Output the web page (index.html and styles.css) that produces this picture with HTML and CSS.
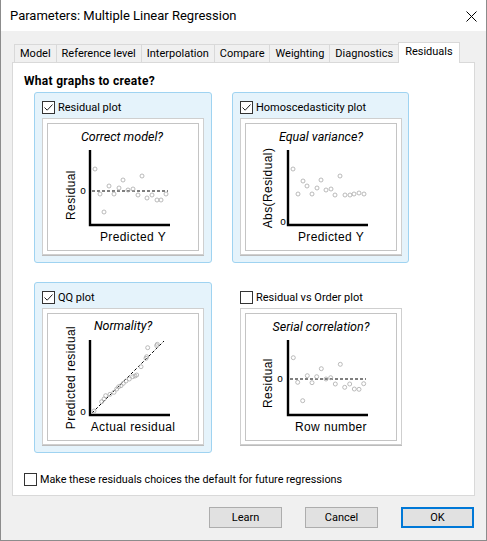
FILE: index.html
```html
<!DOCTYPE html>
<html>
<head>
<meta charset="utf-8">
<link rel="stylesheet" href="styles.css">
</head>
<body>
<div class="window">
  <div class="titlebar">
    <span class="title">Parameters: Multiple Linear Regression</span>
    <svg class="close" width="11" height="11" viewBox="0 0 11 11"><path d="M0.5 0.5L10.5 10.5M10.5 0.5L0.5 10.5" stroke="#000" stroke-width="1" fill="none"/></svg>
  </div>
  <div class="client">
    <div class="tabs">
      <div class="tab">Model</div>
      <div class="tab">Reference level</div>
      <div class="tab">Interpolation</div>
      <div class="tab">Compare</div>
      <div class="tab">Weighting</div>
      <div class="tab">Diagnostics</div>
      <div class="tab tab-active">Residuals</div>
    </div>
    <div class="panel">
      <div class="heading">What graphs to create?</div>
      <div class="grid">
        <!-- Residual plot -->
        <div class="gbox gbox-on">
          <label class="check">
            <svg class="cb" width="13" height="13" viewBox="0 0 13 13"><rect x="0.5" y="0.5" width="12" height="12" fill="#fff" stroke="#333"/><path d="M2.5 6.5L5.2 9.2L10.5 3.5" stroke="#222" stroke-width="1" fill="none"/></svg>
            <span>Residual plot</span>
          </label>
          <div class="frame"><div class="inner">
            <svg class="plot" width="150" height="126" viewBox="1 1 150 126">
              <text class="ptitle" x="75" y="18">Correct model?</text>
              <path class="axis" d="M43 27V102H123"/>
              <path class="dash" d="M45 68H121"/>
              <text class="zero" x="36" y="70.5">o</text>
              <text class="axlab" transform="rotate(-90 24 72)" x="24" y="76">Residual</text>
              <text class="axlab" x="86" y="118">Predicted Y</text>
              <g class="pts">
                <circle cx="48" cy="46" r="2"/><circle cx="53" cy="71" r="2"/><circle cx="57" cy="89" r="2"/><circle cx="62" cy="63" r="2"/><circle cx="67" cy="71" r="2"/><circle cx="72" cy="65" r="2"/><circle cx="76" cy="57" r="2"/><circle cx="81" cy="67" r="2"/><circle cx="86" cy="66" r="2"/><circle cx="91" cy="72" r="2"/><circle cx="95" cy="53" r="2"/><circle cx="100" cy="75" r="2"/><circle cx="105" cy="72" r="2"/><circle cx="110" cy="77" r="2"/><circle cx="114" cy="77" r="2"/><circle cx="119" cy="71" r="2"/>
              </g>
            </svg>
          </div></div>
        </div>
        <!-- Homoscedasticity plot -->
        <div class="gbox gbox-on">
          <label class="check">
            <svg class="cb" width="13" height="13" viewBox="0 0 13 13"><rect x="0.5" y="0.5" width="12" height="12" fill="#fff" stroke="#333"/><path d="M2.5 6.5L5.2 9.2L10.5 3.5" stroke="#222" stroke-width="1" fill="none"/></svg>
            <span>Homoscedasticity plot</span>
          </label>
          <div class="frame"><div class="inner">
            <svg class="plot" width="150" height="126" viewBox="1 1 150 126">
              <text class="ptitle" x="76" y="18">Equal variance?</text>
              <path class="axis" d="M43 27V102H123"/>
              <text class="zero" x="38" y="102">o</text>
              <text class="axlab" transform="rotate(-90 23 65)" x="23" y="69">Abs(Residual)</text>
              <text class="axlab" x="86" y="118">Predicted Y</text>
              <g class="pts">
                <circle cx="48" cy="46" r="2"/><circle cx="53" cy="71" r="2"/><circle cx="58" cy="58" r="2"/><circle cx="62" cy="63" r="2"/><circle cx="67" cy="71" r="2"/><circle cx="72" cy="65" r="2"/><circle cx="76" cy="57" r="2"/><circle cx="81" cy="67" r="2"/><circle cx="86" cy="66" r="2"/><circle cx="90" cy="72" r="2"/><circle cx="95" cy="53" r="2"/><circle cx="100" cy="72" r="2"/><circle cx="105" cy="72" r="2"/><circle cx="109" cy="71" r="2"/><circle cx="114" cy="70" r="2"/><circle cx="119" cy="71" r="2"/>
              </g>
            </svg>
          </div></div>
        </div>
        <!-- QQ plot -->
        <div class="gbox gbox-on">
          <label class="check">
            <svg class="cb" width="13" height="13" viewBox="0 0 13 13"><rect x="0.5" y="0.5" width="12" height="12" fill="#fff" stroke="#333"/><path d="M2.5 6.5L5.2 9.2L10.5 3.5" stroke="#222" stroke-width="1" fill="none"/></svg>
            <span>QQ plot</span>
          </label>
          <div class="frame"><div class="inner">
            <svg class="plot" width="150" height="126" viewBox="1 1 150 126">
              <text class="ptitle" x="76" y="17">Normality?</text>
              <path class="axis" d="M43 27V102H123"/>
              <path class="dash" d="M45 100L117 28"/>
              <text class="zero" x="36" y="102">o</text>
              <text class="axlab" transform="rotate(-90 24 64.5)" x="24" y="68.5">Predicted residual</text>
              <text class="axlab" x="86" y="118">Actual residual</text>
              <g class="pts">
                <circle cx="47" cy="98" r="2"/><circle cx="54.7" cy="88.7" r="2"/><circle cx="57" cy="86" r="2"/><circle cx="58.7" cy="82.7" r="2"/><circle cx="63" cy="81.3" r="2"/><circle cx="67" cy="79.3" r="2"/><circle cx="69.7" cy="76" r="2"/><circle cx="71.7" cy="73.7" r="2"/><circle cx="74" cy="72.7" r="2"/><circle cx="76.3" cy="70.3" r="2"/><circle cx="79" cy="68" r="2"/><circle cx="82.3" cy="66" r="2"/><circle cx="85.7" cy="63.7" r="2"/><circle cx="88" cy="63" r="2"/><circle cx="89.7" cy="62" r="2"/><circle cx="94" cy="53.7" r="2"/><circle cx="99" cy="45.3" r="2"/><circle cx="99.7" cy="43.7" r="2"/><circle cx="100.7" cy="34.7" r="2"/><circle cx="109.7" cy="32.7" r="2"/><circle cx="110.3" cy="31.3" r="2"/>
              </g>
            </svg>
          </div></div>
        </div>
        <!-- Residual vs Order plot -->
        <div class="gbox">
          <label class="check">
            <svg class="cb" width="13" height="13" viewBox="0 0 13 13"><rect x="0.5" y="0.5" width="12" height="12" fill="#fff" stroke="#333"/></svg>
            <span>Residual vs Order plot</span>
          </label>
          <div class="frame"><div class="inner">
            <svg class="plot" width="150" height="126" viewBox="1 1 150 126">
              <text class="ptitle" x="76" y="18">Serial correlation?</text>
              <path class="axis" d="M43 27V102H123"/>
              <path class="dash" d="M45 66H121"/>
              <text class="zero" x="35" y="68.5">o</text>
              <text class="axlab" transform="rotate(-90 23 70)" x="23" y="74">Residual</text>
              <text class="axlab" x="86" y="118">Row number</text>
              <g class="pts">
                <circle cx="48.3" cy="44.7" r="2"/><circle cx="52.7" cy="69.3" r="2"/><circle cx="57.7" cy="87.7" r="2"/><circle cx="62.3" cy="62.7" r="2"/><circle cx="67" cy="69.7" r="2"/><circle cx="71.7" cy="63.7" r="2"/><circle cx="76.3" cy="55.7" r="2"/><circle cx="81" cy="66" r="2"/><circle cx="85.7" cy="64.7" r="2"/><circle cx="90.3" cy="71" r="2"/><circle cx="95.3" cy="51.3" r="2"/><circle cx="99.7" cy="74.3" r="2"/><circle cx="104.7" cy="71" r="2"/><circle cx="109.3" cy="76" r="2"/><circle cx="114" cy="76.3" r="2"/><circle cx="118.7" cy="70.7" r="2"/>
              </g>
            </svg>
          </div></div>
        </div>
      </div>
      <label class="check default-check">
        <svg class="cb" width="13" height="13" viewBox="0 0 13 13"><rect x="0.5" y="0.5" width="12" height="12" fill="#fff" stroke="#333"/></svg>
        <span>Make these residuals choices the default for future regressions</span>
      </label>
    </div>
    <div class="buttons">
      <button class="btn">Learn</button>
      <button class="btn">Cancel</button>
      <button class="btn btn-default">OK</button>
    </div>
  </div>
</div>
</body>
</html>
```

FILE: styles.css
```css
* { box-sizing: border-box; }
html, body { margin: 0; padding: 0; background: #fff; }
body {
  font-family: Roboto, "Liberation Sans", sans-serif;
  font-size: 11px;
  color: #000;
}
.window {
  width: 487px;
  height: 541px;
  border: 1px solid #8c8c8c;
  border-top: none;
  display: flex;
  flex-direction: column;
  background: #f0f0f0;
}
.titlebar {
  height: 31px;
  flex: none;
  background: #fff;
  display: flex;
  align-items: center;
  justify-content: space-between;
  padding: 0 9px 0 9px;
}
.title { font-size: 13px; }
.close { display: block; margin-top: 1px; }
.client {
  flex: 1;
  display: flex;
  flex-direction: column;
  padding: 11px 11px 0 11px;
}
.tabs {
  display: flex;
  align-items: flex-end;
  height: 20px;
  margin-left: 2px;
  position: relative;
  z-index: 1;
}
.tab {
  height: 18px;
  line-height: 17px;
  padding: 0 5px;
  border: 1px solid #d9d9d9;
  border-bottom: none;
  background: #f0f0f0;
  margin-left: -1px;
  white-space: nowrap;
}
.tab:first-child { margin-left: 0; }
.tab-active {
  height: 21px;
  line-height: 18px;
  margin-bottom: -1px;
  background: #fff;
  padding: 0 6px;
}
.panel {
  height: 434px;
  background: #fff;
  border: 1px solid #d9d9d9;
  padding: 10px 0 0 11px;
  display: flex;
  flex-direction: column;
}
.heading {
  font-weight: bold;
  font-size: 12px;
  letter-spacing: 0.3px;
  line-height: 16px;
  height: 16px;
}
.grid {
  margin-top: 3px;
  margin-left: 10px;
  display: grid;
  grid-template-columns: 178px 177px;
  grid-template-rows: 171px 171px;
  column-gap: 20px;
  row-gap: 19px;
}
.gbox {
  border: 1px solid transparent;
  border-radius: 3px;
  padding: 8px 0 0 7px;
}
.gbox-on {
  background: #e5f3fb;
  border-color: #9fd3f1;
}
.check {
  display: flex;
  align-items: center;
  height: 13px;
  gap: 3px;
  white-space: nowrap;
}
.cb { display: block; flex: none; }
.frame {
  margin-top: 4px;
  width: 162px;
  height: 137px;
  background: #fff;
  border: 1px solid #cfcfcf;
  padding: 4px 4px 3px 4px;
  box-shadow: 0 1px 0 #bcbcbc;
}
.inner {
  width: 152px;
  height: 128px;
  border: 1px solid #c4c4c4;
}
.plot { display: block; }
.ptitle {
  font-family: Roboto, "Liberation Sans", sans-serif;
  font-style: italic;
  font-weight: 400;
  font-size: 12.5px;
  text-anchor: middle;
  fill: #000;
}
.axlab {
  font-family: "Liberation Sans", Arial, sans-serif;
  font-size: 12px;
  letter-spacing: 0.4px;
  text-anchor: middle;
  fill: #000;
}
.zero {
  font-family: "Liberation Sans", Arial, sans-serif;
  font-size: 10px;
  text-anchor: middle;
  fill: #000;
}
.axis { fill: none; stroke: #000; stroke-width: 2.4; }
.dash { fill: none; stroke: #000; stroke-width: 1; stroke-dasharray: 3 2; }
.pts circle { fill: none; stroke: #a9a9a9; stroke-width: 0.8; }
.default-check {
  margin-top: 20px;
  font-size: 10.8px;
}
.buttons {
  margin-top: 11px;
  display: flex;
  justify-content: flex-end;
  gap: 23px;
  padding-right: 1px;
}
.btn {
  width: 73px;
  height: 21px;
  font-family: Roboto, "Liberation Sans", sans-serif;
  font-size: 11px;
  color: #000;
  background: #e1e1e1;
  border: 1px solid #adadad;
  padding: 0;
}
.btn-default { border: 2px solid #0078d7; }
```
